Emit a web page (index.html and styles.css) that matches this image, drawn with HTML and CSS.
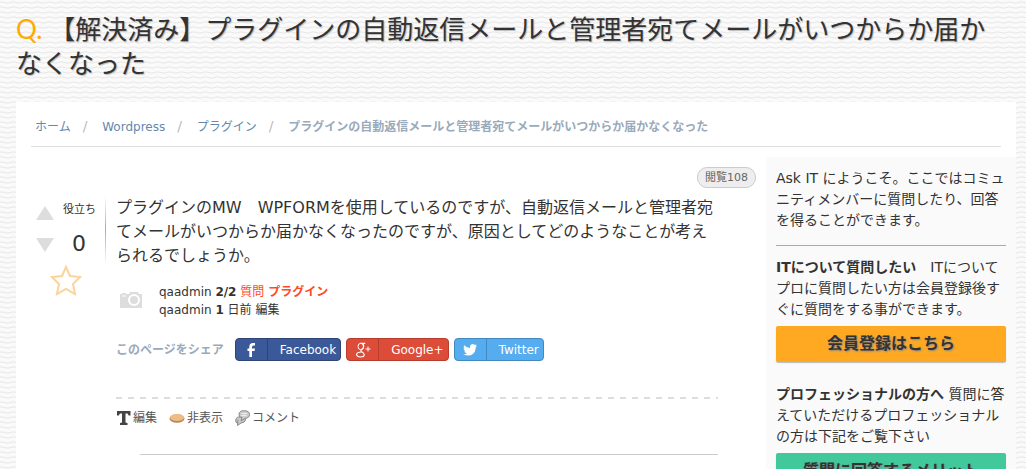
FILE: index.html
```html
<!DOCTYPE html>
<html lang="ja">
<head>
    <meta charset="UTF-8">
    <meta name="viewport" content="width=device-width, initial-scale=1.0">
    <title>Ask IT</title>
    <link rel="stylesheet" href="styles.css">
</head>
<body>
    <h1 class="title"><span class="q">Q.</span>【解決済み】プラグインの自動返信メールと管理者宛てメールがいつからか届かなくなった</h1>
    <div class="page">
        <nav class="breadcrumb">
            <a href="#">ホーム</a><span class="sep">/</span>
            <a href="#">Wordpress</a><span class="sep">/</span>
            <a href="#">プラグイン</a><span class="sep">/</span>
            <strong>プラグインの自動返信メールと管理者宛てメールがいつからか届かなくなった</strong>
        </nav>
        <div class="columns">
            <main class="main">
                <div class="views"><span>閲覧108</span></div>
                <div class="question">
                    <div class="vote">
                        <div class="arrows">
                            <button class="up" aria-label="賛成"></button>
                            <button class="down" aria-label="反対"></button>
                        </div>
                        <div class="count">
                            <span class="label">役立ち</span>
                            <span class="num">0</span>
                        </div>
                        <button class="star" aria-label="お気に入り">
                            <svg width="32" height="32" viewBox="0 0 32 32"><path d="M16 3l4 9 10 1-7 7 2 10-9-5-9 5 2-10-7-7 10-1z" fill="none" stroke="#fad49a" stroke-width="2"/></svg>
                        </button>
                    </div>
                    <div class="content">
                        <p class="text">プラグインのMW　WPFORMを使用しているのですが、自動返信メールと管理者宛てメールがいつからか届かなくなったのですが、原因としてどのようなことが考えられるでしょうか。</p>
                        <div class="meta">
                            <svg width="22" height="16" viewBox="0 0 22 16"><path d="M0 2h2V1h4v1h3l1-2h8l1 2h3v14H0z" fill="#ddd"/><circle cx="14" cy="8" r="5" fill="none" stroke="#fff" stroke-width="2"/><path d="M2 4h4" stroke="#fff"/></svg>
                            <div>
                                <div>qaadmin <b>2/2</b> <a href="#">質問</a> <a href="#"><b>プラグイン</b></a></div>
                                <div>qaadmin <b>1</b> 日前 編集</div>
                            </div>
                        </div>
                        <div class="share">
                            <span class="share-label">このページをシェア</span>
                            <a class="btn facebook" href="#">
                                <span class="icon"><svg width="14" height="16" viewBox="0 0 14 16"><path d="M11 1v2.500H9.500Q8 3.500 8 5v1.500h3l-.4 2.500H8v6H5.300V9H3.500V6.500h1.800V4.800Q5.300 1 9 1z" fill="#fff"/></svg></span>
                                <span class="name">Facebook</span>
                            </a>
                            <a class="btn google" href="#">
                                <span class="icon"><svg width="16" height="16" viewBox="0 0 16 16" fill="none" stroke="#fff"><ellipse cx="5.800" cy="4.500" rx="2.800" ry="3.200"/><path d="M5.500 1.300h4.700M7.500 1.500Q9 3 8.600 5T6.500 7.500Q5 9 7 10t2.300 3Q9 15 5.500 15T1.500 12.500Q2 10 6.500 10" stroke-width="1.200"/><path d="M10.500 7h5M13 4.500v5"/></svg></span>
                                <span class="name">Google+</span>
                            </a>
                            <a class="btn twitter" href="#">
                                <span class="icon"><svg width="14" height="14" viewBox="0 0 14 14"><path d="M1 2q2.500 3 6 3-.5-3.500 2.500-4 1.500 0 2.500 1l1.800-.6L12.700 3.500 14 3.200 12.600 4.800Q12.600 9 9.500 11.300T0 11.500q2.500 0 4-1.300-2-.2-2.700-2h1.200Q.5 7.200.5 5.300l1.200.3Q0 4 1 2z" fill="#fff"/></svg></span>
                                <span class="name">Twitter</span>
                            </a>
                        </div>
                        <div class="actions">
                            <button><svg width="15" height="16" viewBox="0 0 15 16"><path d="M1 1h13.500v4.500h-1.800L11.500 3.500H9.500v9l2 .5v2H4v-2l2-.5v-9H4L2.800 5.500H1z" fill="#444"/></svg>編集</button>
                            <button><svg width="16" height="16" viewBox="0 0 16 16"><ellipse cx="8" cy="8.500" rx="7.500" ry="4.300" fill="#b98550"/><ellipse cx="8" cy="7.500" rx="7" ry="3.600" fill="#edbd88"/></svg>非表示</button>
                            <button><svg width="15" height="16" viewBox="0 0 15 16" fill="#ccc" stroke="#888"><path d="M3 9.500l-.5 6L6 13q4-.5 4.500-3T6 7 .7 10t2.300 3"/><path d="M7 7.500L6 11l4-2.500q4.500-.5 4.500-4T9.500.7 4 4t3 3.500z"/><path d="M7 3.500h5M6.500 5.500h5" stroke="#eee"/></svg>コメント</button>
                        </div>
                        <hr class="bottom-line">
                    </div>
                </div>
            </main>
            <aside class="sidebar">
                <p>Ask IT にようこそ。ここではコミュニティメンバーに質問したり、回答を得ることができます。</p>
                <hr>
                <p><b>ITについて質問したい</b>　ITについてプロに質問したい方は会員登録後すぐに質問をする事ができます。</p>
                <a class="side-btn orange" href="#">会員登録はこちら</a>
                <p><b>プロフェッショナルの方へ</b> 質問に答えていただけるプロフェッショナルの方は下記をご覧下さい</p>
                <a class="side-btn green" href="#">質問に回答するメリット</a>
            </aside>
        </div>
    </div>
</body>
</html>
```
FILE: styles.css
```css
* {
    box-sizing: border-box;
}
html {
    scrollbar-width: none;
}
body {
    margin: 0;
    padding: 12px 10px 0 16px;
    font-family: "DejaVu Sans", "Noto Sans CJK JP", sans-serif;
    font-size: 12px;
    line-height: 18px;
    color: #333;
    background: #fafafa url("data:image/svg+xml,%3Csvg xmlns='http://www.w3.org/2000/svg' width='12' height='5'%3E%3Cpath d='M0 2h3l3 1h3l3-1' fill='none' stroke='%23e6e6e6'/%3E%3C/svg%3E");
}
a {
    color: inherit;
    text-decoration: none;
}
p {
    margin: 0;
}
button {
    border: none;
    padding: 0;
    background: none;
    font: inherit;
    color: inherit;
}
.title {
    margin: 0 0 22px;
    padding-right: 20px;
    font-family: Lato, "Noto Sans CJK JP", sans-serif;
    font-size: 26px;
    font-weight: normal;
    line-height: 34px;
    text-shadow: 1px 1px 1px #bbb;
}
.q {
    color: #fa0;
    margin-right: 7px;
    text-shadow: none;
}
.page {
    background: #fff;
    padding-top: 15px;
}
.breadcrumb {
    margin: 0 15px 10px;
    padding: 0 4px 10px;
    border-bottom: 1px solid #ddd;
    color: #6488ac;
}
.breadcrumb .sep {
    margin: 0 11px 0 12px;
    font-size: 14px;
    color: #bbb;
}
.breadcrumb strong {
    color: #9ab;
}
.columns {
    display: flex;
}
.main {
    flex: 1;
    padding: 10px 10px 0 15px;
}
.views {
    text-align: right;
    line-height: 20px;
}
.views span {
    display: inline-block;
    padding: 1px 7px 0;
    border: 1px solid #ccc;
    border-radius: 10px;
    background: #eee;
    color: #666;
    font-size: 11px;
    line-height: 18px;
}
.question {
    display: flex;
    padding: 8px 38px 0 0;
}
.vote {
    display: flex;
    flex-wrap: wrap;
    align-content: flex-start;
    width: 75px;
    height: 68px;
    padding-left: 5px;
    border-right: 1px solid;
    border-image: linear-gradient(#fff, #f0907f, #fff) 1;
}
.arrows {
    display: flex;
    flex-direction: column;
    gap: 18px;
    padding-top: 10px;
}
.up, .down {
    border: 9px solid transparent;
}
.up {
    border-top: none;
    border-bottom: 14px solid #ddd;
}
.down {
    border-bottom: none;
    border-top: 14px solid #ddd;
}
.count {
    flex: 1;
    padding: 5px 0 0 9px;
}
.label, .num {
    display: block;
    font-size: 11px;
}
.num {
    padding-left: 9px;
    font-size: 22px;
    line-height: 50px;
}
.star {
    margin: -5px 0 0 14px;
    height: 32px;
}
.content {
    flex: 1;
    padding-left: 10px;
}
.text {
    font-size: 16px;
    line-height: 24px;
}
.meta {
    display: flex;
    gap: 17px;
    padding: 15px 0 0 4px;
}
.meta svg {
    margin-top: 9px;
}
.meta a {
    color: #ff4824;
}
.share {
    display: flex;
    gap: 5px;
    align-items: center;
    padding-top: 19px;
}
.share-label {
    margin-right: 6px;
    font-weight: bold;
    color: #9ab;
}
.btn {
    display: flex;
    height: 23px;
    border: 1px solid;
    border-radius: 4px;
    line-height: 23px;
}
.btn .icon {
    display: flex;
    align-items: center;
    justify-content: center;
    width: 32px;
    border-right: 1px solid;
    border-color: inherit;
}
.btn .name {
    padding: 0 4px 0 12px;
    color: #fff;
}
.facebook {
    background: #3b5998;
    border-color: #2d4474;
}
.google {
    background: #dd4b39;
    border-color: #b63c2d;
}
.twitter {
    background: #55acee;
    border-color: #4189c0;
}
.actions {
    display: flex;
    gap: 12px;
    margin-top: 36px;
    padding: 12px 0 27px;
    background: repeating-linear-gradient(90deg, #ddd 0 6px, transparent 6px 12px) 0 0 / 100% 2px no-repeat;
    color: #555;
}
.actions button {
    display: flex;
    align-items: center;
    gap: 2px;
}
.bottom-line {
    margin: 0 0 40px 24px;
    border: none;
    border-top: 1px solid #ccc;
}
.sidebar {
    width: 250px;
    padding: 11px 10px 20px;
    background: #fafafa;
    font-size: 14px;
    line-height: 21px;
}
.sidebar hr {
    margin: 14px 0 11px;
    border: none;
    border-top: 1px solid #aaa;
}
.side-btn {
    display: block;
    margin: 6px 0 22px;
    border-radius: 2px;
    box-shadow: 0 1px 1px #bbb;
    font-size: 16px;
    font-weight: bold;
    line-height: 36px;
    text-align: center;
    text-shadow: 1px 1px 2px #888;
}
.orange {
    background: #ffa922;
}
.green {
    background: #42c99b;
}
```
